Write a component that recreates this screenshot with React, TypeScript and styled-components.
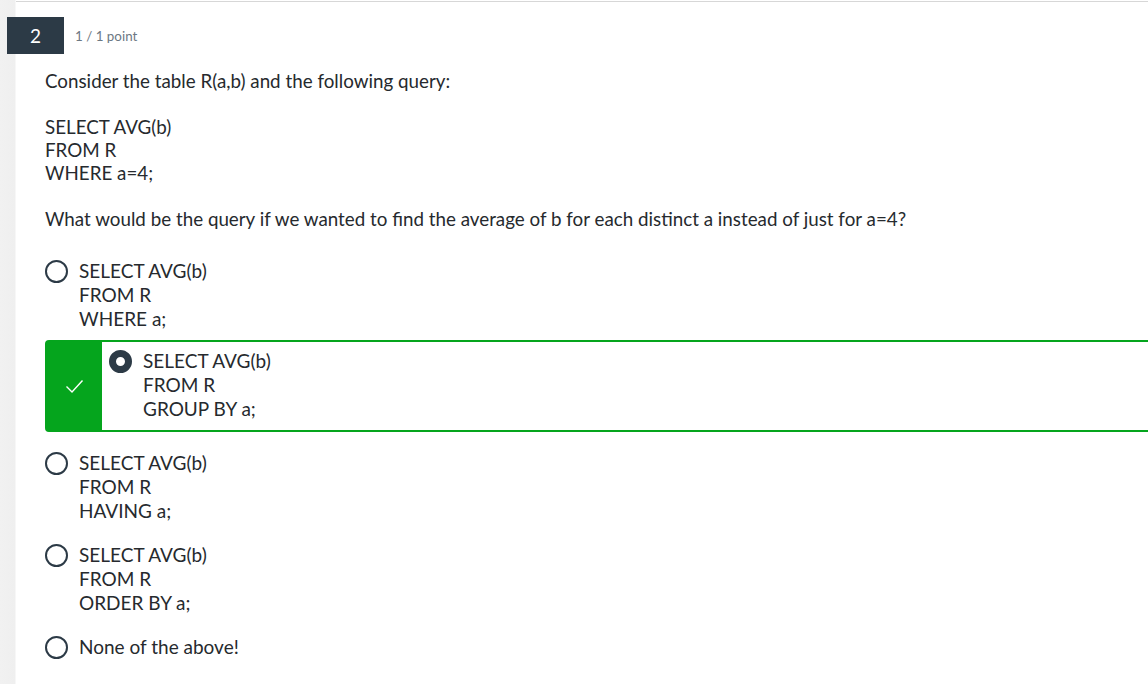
import React from "react";
import styled, { createGlobalStyle } from "styled-components";

const GlobalStyle = createGlobalStyle`
  html, body { margin: 0; padding: 0; background: #fff; }
  body {
    font-family: Lato, "Open Sans", "Liberation Sans", sans-serif;
    overflow: hidden;
  }
`;

const Page = styled.div`
  width: 1148px;
  height: 684px;
  overflow: hidden;
  background: linear-gradient(to right, #f1f1f1 0, #efefef 15px, #fff 16px);
`;

const Sheet = styled.div`
  margin-top: 1px;
  margin-left: 16px;
  border-top: 1px solid #d7d7d7;
  height: 100%;
`;

const Header = styled.div`
  display: flex;
  align-items: center;
  gap: 11px;
  margin-left: -9px;
  padding-top: 15px;
`;

const Badge = styled.div`
  width: 57px;
  height: 37px;
  background: #2c3a46;
  color: #fff;
  font-size: 19px;
  display: flex;
  align-items: center;
  justify-content: center;
`;

const Points = styled.span`
  font-size: 13.4px;
  color: #6c7883;
`;

const Body = styled.div`
  padding-left: 29px;
  color: #262a2e;
  font-size: 18.8px;
`;

const Para = styled.p`
  margin: 0;
  line-height: 23px;
  & + & { margin-top: 23px; }
`;

const FirstPara = styled(Para)`
  margin-top: 15px;
`;

const Options = styled.div`
  margin-top: 19px;
  display: flex;
  flex-direction: column;
  margin-right: -40px;
`;

const Option = styled.div<{ $selected?: boolean }>`
  display: flex;
  align-items: stretch;
  padding: ${(p) => (p.$selected ? "0" : "10px 0")};
  border: ${(p) => (p.$selected ? "2px solid #05a51d" : "none")};
  border-radius: ${(p) => (p.$selected ? "4px" : "0")};
  margin-top: ${(p) => (p.$selected ? "-1px" : "0")};
  margin-bottom: ${(p) => (p.$selected ? "9px" : "0")};
`;

const CheckCol = styled.div`
  width: 55px;
  background: #05a51d;
  display: flex;
  align-items: center;
  justify-content: center;
  flex-shrink: 0;
`;

const OptionInner = styled.div<{ $selected?: boolean }>`
  display: flex;
  align-items: flex-start;
  gap: 11px;
  padding: ${(p) => (p.$selected ? "7px 0 9px 7px" : "0")};
`;

const Radio = styled.span<{ $checked?: boolean }>`
  box-sizing: border-box;
  width: 23px;
  height: 23px;
  margin-top: 0.5px;
  border-radius: 50%;
  flex-shrink: 0;
  border: ${(p) => (p.$checked ? "7px solid #2c3a46" : "2px solid #2c3a46")};
  background: #fff;
`;

const OptionText = styled.div`
  font-size: 19px;
  line-height: 24px;
  color: #262a2e;
`;

const Check = () => (
  <svg width="19" height="15" viewBox="0 0 19 15" fill="none">
    <path d="M1.5 7.5 L7 13 L17.5 1.5" stroke="#fff" strokeWidth="1.4" />
  </svg>
);

const options: { lines: string[]; selected?: boolean }[] = [
  { lines: ["SELECT AVG(b)", "FROM R", "WHERE a;"] },
  { lines: ["SELECT AVG(b)", "FROM R", "GROUP BY a;"], selected: true },
  { lines: ["SELECT AVG(b)", "FROM R", "HAVING a;"] },
  { lines: ["SELECT AVG(b)", "FROM R", "ORDER BY a;"] },
  { lines: ["None of the above!"] },
];

export default function App() {
  return (
    <>
      <GlobalStyle />
      <Page>
        <Sheet>
          <Header>
            <Badge>2</Badge>
            <Points>1 / 1 point</Points>
          </Header>
          <Body>
            <FirstPara>Consider the table R(a,b) and the following query:</FirstPara>
            <Para>
              SELECT AVG(b)
              <br />
              FROM R
              <br />
              WHERE a=4;
            </Para>
            <Para>
              What would be the query if we wanted to find the average of b for each distinct a instead of just for a=4?
            </Para>
            <Options>
              {options.map((o, i) => (
                <Option key={i} $selected={o.selected}>
                  {o.selected && (
                    <CheckCol>
                      <Check />
                    </CheckCol>
                  )}
                  <OptionInner $selected={o.selected}>
                    <Radio $checked={o.selected} />
                    <OptionText>
                      {o.lines.map((l, j) => (
                        <div key={j}>{l}</div>
                      ))}
                    </OptionText>
                  </OptionInner>
                </Option>
              ))}
            </Options>
          </Body>
        </Sheet>
      </Page>
    </>
  );
}
